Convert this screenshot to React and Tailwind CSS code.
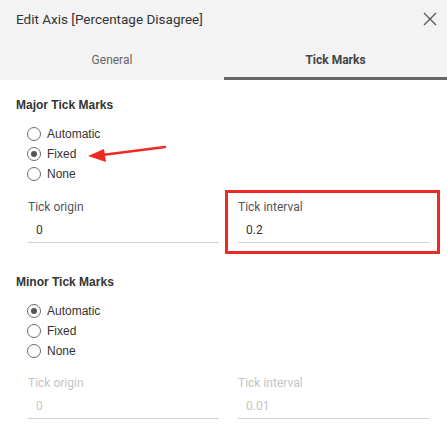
import React from "react";

function Radio({ label, checked }) {
  return (
    <div className="flex items-center h-[20px]">
      <span className="w-[14px] h-[14px] rounded-full border border-[#6b6b6b] bg-white flex items-center justify-center">
        {checked && <span className="w-[6px] h-[6px] rounded-full bg-[#555]" />}
      </span>
      <span className="ml-[6px] text-[12px] text-[#333] font-['Liberation_Sans',Arial,sans-serif]">{label}</span>
    </div>
  );
}

function Field({ label, value, disabled }) {
  return (
    <div className="flex-1">
      <div className={"text-[12px] leading-[14px] font-['Roboto',sans-serif] " + (disabled ? "text-[#c4c4c4]" : "text-[#555]")}>{label}</div>
      <div className={"mt-[8px] pl-[8px] pb-[4px] text-[12px] leading-[16px] border-b border-[#cfcfcf] font-['Roboto',sans-serif] " + (disabled ? "text-[#c4c4c4]" : "text-[#333]")}>{value}</div>
    </div>
  );
}

export default function App() {
  return (
    <div className="w-[447px] h-[433px] bg-white overflow-hidden relative">
      <div className="bg-[#f3f3f3] h-[80px] flex flex-col">
        <div className="flex items-center justify-between pl-[16px] pr-[10px] h-[38px]">
          <span className="text-[13.5px] text-[#333] font-['Roboto',sans-serif]">Edit Axis [Percentage Disagree]</span>
          <svg width="14" height="14" viewBox="0 0 14 14">
            <path d="M1 1 L13 13 M13 1 L1 13" stroke="#555" strokeWidth="1.3" />
          </svg>
        </div>
        <div className="flex h-[42px]">
          <div className="w-[224px] flex items-center justify-center text-[12px] text-[#666] font-['Roboto',sans-serif] pt-[2px]">General</div>
          <div className="flex-1 flex flex-col">
            <div className="flex-1 flex items-center justify-center text-[12px] font-bold text-[#444] font-['Roboto',sans-serif] pt-[5px]">Tick Marks</div>
            <div className="h-[3px] bg-[#666]" />
          </div>
        </div>
      </div>

      <div className="pl-[16px]">
        <div className="mt-[18px] text-[12px] font-bold text-[#333] font-['Liberation_Sans',Arial,sans-serif] leading-[14px]">Major Tick Marks</div>
        <div className="mt-[12px] pl-[11px]">
          <Radio label="Automatic" />
          <Radio label="Fixed" checked />
          <Radio label="None" />
        </div>
        <div className="flex mt-[6px]">
          <div className="w-[209px] flex pl-[12px] pr-[6px] pt-[10px]">
            <Field label="Tick origin" value="0" />
          </div>
          <div className="w-[215px] h-[64px] flex border-[3px] border-[#ee2a24] pl-[10px] pr-[8px] pt-[7px]">
            <Field label="Tick interval" value="0.2" />
          </div>
        </div>

        <div className="mt-[21px] text-[12px] font-bold text-[#333] font-['Liberation_Sans',Arial,sans-serif] leading-[14px]">Minor Tick Marks</div>
        <div className="mt-[12px] pl-[11px]">
          <Radio label="Automatic" checked />
          <Radio label="Fixed" />
          <Radio label="None" />
        </div>
        <div className="flex mt-[15px]">
          <div className="w-[209px] flex pl-[12px] pr-[6px]">
            <Field label="Tick origin" value="0" disabled />
          </div>
          <div className="w-[215px] flex pl-[13px] pr-[11px]">
            <Field label="Tick interval" value="0.01" disabled />
          </div>
        </div>
      </div>

      <svg className="absolute left-[84px] top-[140px]" width="86" height="26" viewBox="0 0 86 26">
        <path d="M81 7 L18 15" stroke="#ee2a24" strokeWidth="2.5" strokeLinecap="round" />
        <path d="M4 16 L20 9 L22 22 Z" fill="#ee2a24" />
      </svg>
    </div>
  );
}
